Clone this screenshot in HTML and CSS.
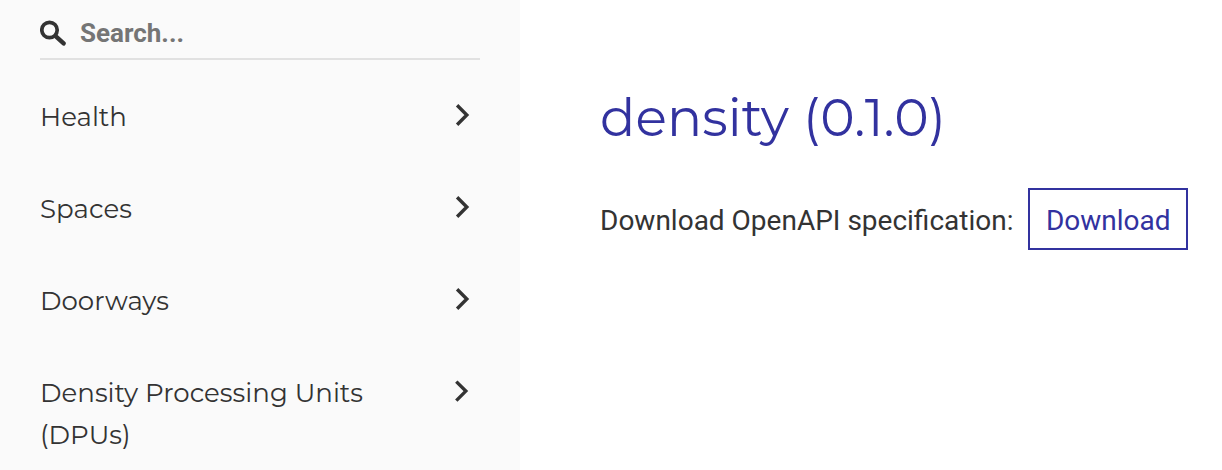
FILE: index.html
```html
<!DOCTYPE html>
<html lang="en">
<head>
<meta charset="utf-8">
<title>density</title>
<link rel="stylesheet" href="styles.css">
</head>
<body>
<div class="layout">
  <aside class="sidebar">
    <div class="search">
      <svg class="search-icon" viewBox="0 0 26 26"><circle cx="9.5" cy="10" r="7.7"/><path d="M15.6 16.1l8 7.3"/></svg>
      <input class="search-input" type="text" placeholder="Search..." aria-label="Search">
    </div>
    <nav class="menu">
      <a class="item"><span class="label">Health</span><svg class="chevron" viewBox="0 0 14 22"><path d="M1.1 1.3l9.7 9.7-9.7 9.7"/></svg></a>
      <a class="item"><span class="label">Spaces</span><svg class="chevron" viewBox="0 0 14 22"><path d="M1.1 1.3l9.7 9.7-9.7 9.7"/></svg></a>
      <a class="item"><span class="label">Doorways</span><svg class="chevron" viewBox="0 0 14 22"><path d="M1.1 1.3l9.7 9.7-9.7 9.7"/></svg></a>
      <a class="item"><span class="label">Density Processing Units (DPUs)</span><svg class="chevron" viewBox="0 0 14 22"><path d="M.3 1.6l9.5 9.5-9.5 9.5"/></svg></a>
    </nav>
  </aside>
  <main class="content">
    <h1 class="title">density (0.1.0)</h1>
    <p class="download">Download OpenAPI specification:<a class="button">Download</a></p>
  </main>
</div>
</body>
</html>
```
FILE: styles.css
```css
* { box-sizing: border-box; }
body { margin: 0; background: #fff; color: #333; font-family: Roboto, sans-serif; }
.layout { display: flex; height: 470px; overflow: hidden; }
.sidebar { width: 520px; flex: none; padding: 0 40px; background: #fafafa; }
.search { display: flex; align-items: center; height: 60px; padding-top: 8px; border-bottom: 2px solid #e1e1e1; }
.search-icon { width: 26px; height: 26px; flex: none; fill: none; stroke: #333; stroke-width: 3.7; stroke-linecap: round; }
.search-icon path { stroke-width: 4.4; }
.search-input { border: 0; outline: 0; background: none; padding: 0; margin-left: 14px; width: 360px; font: 700 26px/30px Roboto, sans-serif; }
.search-input::placeholder { color: #757575; opacity: 1; }
.menu { padding-top: 11px; }
.item { display: flex; justify-content: space-between; align-items: flex-start; padding: 25px 10px 25px 0; font: 400 26px/42px Montserrat, "Open Sans", sans-serif; letter-spacing: .04px; }
.label { width: 340px; }
.chevron { width: 14px; height: 22px; margin-top: 8px; overflow: visible; fill: none; stroke: #333; stroke-width: 3.4; }
.content { padding: 84px 0 0 80px; white-space: nowrap; }
.title { margin: 0; font: 400 52px/68px Montserrat, "Open Sans", sans-serif; letter-spacing: .14px; color: #32329f; }
.download { display: flex; align-items: baseline; margin: 36px 0 0; font-size: 28px; line-height: 46px; }
.button { width: 160px; height: 62px; margin-left: 14.5px; padding: 8px 0 0 16px; border: 2px solid #32329f; color: #32329f; }
```
